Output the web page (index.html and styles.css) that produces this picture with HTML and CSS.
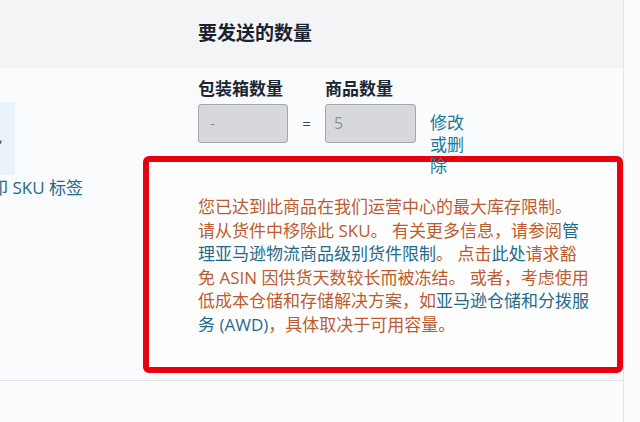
FILE: index.html
```html
<!DOCTYPE html>
<html lang="zh-CN">
<head>
<meta charset="utf-8">
<title>要发送的数量</title>
<link rel="stylesheet" href="styles.css">
</head>
<body>
<div class="page">
  <div class="main">
    <div class="header">
      <h2 class="title">要发送的数量</h2>
    </div>
    <div class="body">
      <div class="left">
        <div class="note-box">,</div>
        <div class="sku-link">印 SKU 标签</div>
      </div>
      <div class="right">
        <div class="fields">
          <div class="field">
            <div class="label">包装箱数量</div>
            <div class="input box-input">-</div>
          </div>
          <div class="eq">=</div>
          <div class="field">
            <div class="label">商品数量</div>
            <div class="input item-input">5</div>
          </div>
          <a class="edit-link">修改或删除</a>
        </div>
        <div class="alert">
          <p class="alert-text">您已达到此商品在我们运营中心的最大库存限制。<br>请从货件中移除此 SKU。 有关更多信息，请参阅<a class="lnk">管<br>理亚马逊物流商品级别货件限制</a>。 点击<a class="lnk">此处</a>请求豁<br>免 ASIN 因供货天数较长而被冻结。 或者，考虑使用<br>低成本仓储和存储解决方案，如<a class="lnk">亚马逊仓储和分拨服<br>务 (AWD)</a>，具体取决于可用容量。</p>
        </div>
      </div>
    </div>
    <div class="footer"></div>
  </div>
  <div class="side"></div>
</div>
</body>
</html>
```

FILE: styles.css
```css
html, body {
  margin: 0;
  padding: 0;
}
body {
  font-family: "Open Sans", "Noto Sans CJK SC", sans-serif;
  background: #fbfbfc;
  color: #1b2633;
}
.page {
  display: flex;
  width: 640px;
  height: 422px;
  overflow: hidden;
}
.main {
  width: 623px;
  border-right: 1px solid #e1e3e7;
  background: #fafbfc;
  display: flex;
  flex-direction: column;
}
.side {
  flex: 1;
  background: #fcfcfd;
}
.header {
  height: 68px;
  background: #f3f4f6;
  padding-left: 198px;
  box-sizing: border-box;
  display: flex;
  align-items: center;
}
.title {
  margin: 0;
  font-family: "Noto Sans CJK SC", sans-serif;
  font-size: 19px;
  font-weight: 700;
  line-height: 24px;
  color: #1a222d;
  padding-bottom: 4px;
}
.body {
  display: flex;
  height: 313px;
  box-sizing: border-box;
  border-bottom: 1px solid #dfe1e5;
}
.left {
  width: 143px;
  flex: none;
}
.note-box {
  margin-top: 34px;
  width: 15px;
  height: 73px;
  background: #eaf2fa;
  color: #2a3440;
  font-size: 14px;
  line-height: 70px;
  box-sizing: border-box;
  text-indent: -1px;
}
.sku-link {
  margin-top: 2px;
  margin-left: -9px;
  font-size: 17px;
  line-height: 22px;
  color: #1d6b8d;
  white-space: nowrap;
}
.right {
  flex: 1;
  display: flex;
  flex-direction: column;
}
.fields {
  display: flex;
  padding-left: 55px;
  padding-top: 9px;
  height: 75px;
  box-sizing: border-box;
  align-items: flex-start;
}
.field {
  display: flex;
  flex-direction: column;
}
.label {
  font-family: "Noto Sans CJK SC", sans-serif;
  font-size: 17px;
  font-weight: 700;
  line-height: 22px;
  color: #1b2633;
  margin-bottom: 5px;
}
.input {
  height: 39px;
  box-sizing: border-box;
  background: #d7d8db;
  border: 1px solid #a4a8ad;
  border-radius: 3px;
  color: #8d9298;
  font-size: 16px;
  line-height: 37px;
  padding-left: 11px;
}
.box-input {
  width: 90px;
}
.item-input {
  width: 91px;
  padding-left: 8px;
}
.eq {
  width: 37px;
  text-align: center;
  margin-top: 27px;
  line-height: 39px;
  font-size: 15px;
  color: #3a4450;
}
.edit-link {
  width: 36px;
  margin-left: 14px;
  margin-top: 35px;
  font-size: 17px;
  line-height: 21.5px;
  color: #1b7896;
  position: relative;
  z-index: 2;
}
.alert {
  margin-top: 13px;
  width: 480px;
  height: 217px;
  box-sizing: border-box;
  border: 6px solid #e8000d;
  border-radius: 6px;
  background: #fefefe;
  padding: 33px 0 0 49px;
}
.alert-text {
  margin: 0;
  font-size: 17px;
  line-height: 23.6px;
  color: #bd5b2e;
  white-space: nowrap;
}
.lnk {
  color: #1f6b8c;
}
.footer {
  flex: 1;
  background: #fafbfc;
}
```
